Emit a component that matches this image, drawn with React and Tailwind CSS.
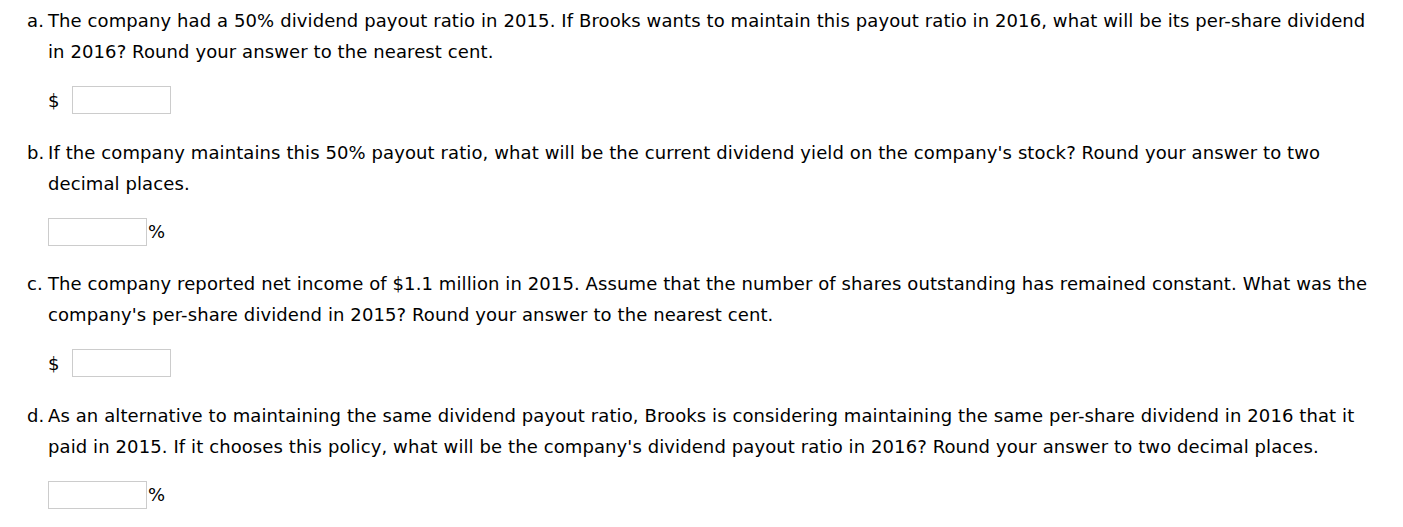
const questions = [
  {
    label: "a.",
    text: "The company had a 50% dividend payout ratio in 2015. If Brooks wants to maintain this payout ratio in 2016, what will be its per-share dividend in 2016? Round your answer to the nearest cent.",
    kind: "dollar",
  },
  {
    label: "b.",
    text: "If the company maintains this 50% payout ratio, what will be the current dividend yield on the company's stock? Round your answer to two decimal places.",
    kind: "percent",
  },
  {
    label: "c.",
    text: "The company reported net income of $1.1 million in 2015. Assume that the number of shares outstanding has remained constant. What was the company's per-share dividend in 2015? Round your answer to the nearest cent.",
    kind: "dollar",
  },
  {
    label: "d.",
    text: "As an alternative to maintaining the same dividend payout ratio, Brooks is considering maintaining the same per-share dividend in 2016 that it paid in 2015. If it chooses this policy, what will be the company's dividend payout ratio in 2016? Round your answer to two decimal places.",
    kind: "percent",
  },
];

const Answer = ({ kind }) => {
  if (kind === "dollar") {
    return (
      <div className="flex items-center h-[28px]">
        <span className="w-[24px]">$</span>
        <input
          type="text"
          className="w-[99px] h-[28px] border border-[#cccccc] bg-white outline-none"
        />
      </div>
    );
  }
  return (
    <div className="flex items-center h-[28px]">
      <input
        type="text"
        className="w-[99px] h-[28px] border border-[#cccccc] bg-white outline-none"
      />
      <span className="ml-px">%</span>
    </div>
  );
};

export default function App() {
  return (
    <div className="bg-white w-[1403px] h-[527px] overflow-hidden pl-[27px] pt-[5px] text-[18px] leading-[31px] tracking-[0.1px] text-black font-['Verdana','DejaVu_Sans',sans-serif]">
      {questions.map((q) => (
        <div key={q.label} className="w-[1351px] mb-[22.5px]">
          <div className="flex">
            <span className="w-[21px] shrink-0">{q.label}</span>
            <p>{q.text}</p>
          </div>
          <div className="pl-[21px] mt-[19px]">
            <Answer kind={q.kind} />
          </div>
        </div>
      ))}
    </div>
  );
}
